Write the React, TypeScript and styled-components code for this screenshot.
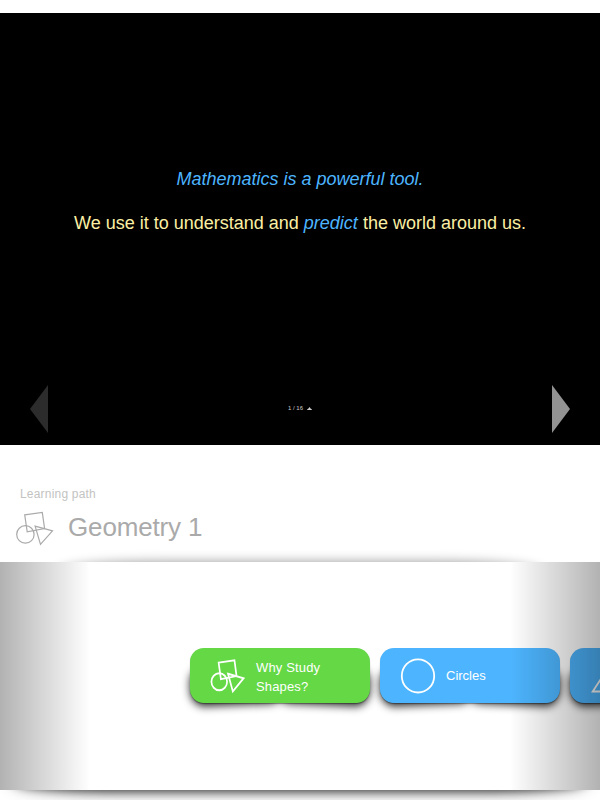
import React from "react";
import styled, { createGlobalStyle } from "styled-components";

const GlobalStyle = createGlobalStyle`
  html, body { margin: 0; background: #fff; overflow: hidden; }
  body { font-family: "Liberation Sans", Arial, sans-serif; }
`;

const Page = styled.div`
  display: flex;
  flex-direction: column;
  height: 800px;
  padding-top: 13px;
  box-sizing: border-box;
  overflow: hidden;
  isolation: isolate;
`;

const Slideshow = styled.section`
  display: flex;
  flex-direction: column;
  flex: none;
  height: 432px;
  background: #000;
`;

const Slide = styled.div`
  flex: 1;
  padding-top: 155px;
  text-align: center;
  color: #fbefa4;
  font-size: 18px;
  line-height: 22px;
`;

const Line = styled.p`
  margin: 0 0 22px;
`;

const Accent = styled.em`
  color: #4db5ff;
`;

const Controls = styled.nav`
  display: flex;
  align-items: center;
  justify-content: space-between;
  height: 48px;
  padding: 0 30px 12px;
`;

const ArrowButton = styled.button<{ $tone: string }>`
  display: flex;
  padding: 0;
  border: 0;
  background: none;
  color: ${(p) => p.$tone};
`;

const Counter = styled.div`
  display: flex;
  align-items: center;
  gap: 4px;
  color: #ccc;
  font-size: 6px;
  line-height: 8px;
  margin-top: -2px;
`;

const Heading = styled.header`
  flex: none;
  height: 117px;
  box-sizing: border-box;
  padding: 41px 0 0 14px;
`;

const Eyebrow = styled.div`
  padding-left: 6px;
  font-size: 12px;
  line-height: 16px;
  letter-spacing: 0.2px;
  color: #c3c3c3;
`;

const TitleRow = styled.div`
  display: flex;
  align-items: center;
  gap: 14px;
  height: 40px;
  margin-top: 5px;
  color: #aaa;
`;

const PathIcon = styled.span`
  display: flex;
  padding-top: 1px;
`;

const Title = styled.h1`
  margin: 0;
  font-size: 26px;
  line-height: 40px;
  font-weight: 400;
  letter-spacing: -0.15px;
`;

const PathPanel = styled.section`
  position: relative;
  flex: none;
  height: 228px;
  background: #fff;

  &::before, &::after {
    content: "";
    position: absolute;
    z-index: -1;
  }
  &::before {
    inset: 0 60px auto;
    height: 100px;
    border-radius: 100px / 10px;
    box-shadow: 0 0 12px rgba(0, 0, 0, 0.4);
  }
  &::after {
    inset: auto 14px 0;
    height: 100px;
    border-radius: 100px / 10px;
    box-shadow: 0 0 16px rgba(0, 0, 0, 0.8), 0 1px 8px rgba(0, 0, 0, 0.4);
  }
`;

const Track = styled.div`
  position: relative;
  z-index: 0;
  display: flex;
  gap: 10px;
  height: 100%;
  padding: 86px 0 0 190px;
  box-sizing: border-box;
  overflow: hidden;
`;

const Fade = styled.div<{ $side: "left" | "right" }>`
  position: absolute;
  z-index: 2;
  top: 0;
  bottom: 0;
  ${(p) => p.$side}: 0;
  width: 90px;
  background: linear-gradient(to ${(p) => (p.$side === "left" ? "right" : "left")}, rgba(0, 0, 0, 0.3), rgba(0, 0, 0, 0));
`;

const CardShell = styled.div`
  position: relative;
  flex: none;
  width: 180px;
  height: 55px;

  &::before, &::after {
    content: "";
    position: absolute;
    z-index: -1;
    bottom: 2px;
    width: 89px;
    height: 37px;
    border-radius: 14px 10px 10px 14px;
    box-shadow: 0 3px 8px 1px rgba(0, 0, 0, 0.85);
  }
  &::before { left: 1px; transform: rotate(-2.6deg); }
  &::after { right: 1px; transform: rotate(2.6deg); border-radius: 10px 14px 14px 10px; }
`;

const Card = styled.a<{ $color: string }>`
  display: flex;
  align-items: center;
  gap: 10px;
  height: 55px;
  box-sizing: border-box;
  padding: 0 30px 0 19px;
  border-radius: 14px;
  background: ${(p) => p.$color};
  box-shadow: 0 1px 1px rgba(0, 0, 0, 0.35);
  color: #fff;
  font-size: 13px;
  line-height: 19px;
`;

const CardIcon = styled.span`
  display: flex;
  flex: none;
  width: 37px;
`;

const CardLabel = styled.span<{ $wrapped?: boolean }>`
  padding-top: ${(p) => (p.$wrapped ? 3 : 0)}px;
  padding-bottom: ${(p) => (p.$wrapped ? 0 : 1)}px;
  letter-spacing: ${(p) => (p.$wrapped ? "0.15px" : "0")};
`;

function Arrow({ dir }: { dir: "left" | "right" }) {
  return (
    <svg width="18" height="48" viewBox="0 0 18 48" fill="currentColor">
      <path d={dir === "left" ? "M18 0V48L0 24Z" : "M0 0V48L18 24Z"} />
    </svg>
  );
}

function ShapesIcon({ width, height, stroke }: { width: number; height: number; stroke: number }) {
  return (
    <svg width={width} height={height} viewBox="0 0 40 40" preserveAspectRatio="none" fill="none" stroke="currentColor" strokeWidth={stroke}>
      <circle cx="11.4" cy="26.4" r="8.7" />
      <path d="M10.7 6.8L28.3 4.4L30.6 20.6L13.2 23.8Z" />
      <path d="M21.1 18.2L38.5 22.8L26.5 36.3Z" />
    </svg>
  );
}

function CircleIcon() {
  return (
    <svg width="37" height="37" viewBox="0 0 37 37" fill="none" stroke="currentColor" strokeWidth="1.8">
      <ellipse cx="19" cy="18.9" rx="16.2" ry="16.6" />
    </svg>
  );
}

function TriangleIcon() {
  return (
    <svg width="37" height="37" viewBox="0 0 37 37" fill="none" stroke="currentColor" strokeWidth="1.8">
      <path d="M3.7 34.5L19 11L35 34.5Z" />
    </svg>
  );
}

const cards = [
  { id: "why", label: "Why Study Shapes?", wrapped: true, color: "#64d845", icon: <ShapesIcon width={36} height={39} stroke={1.9} /> },
  { id: "circles", label: "Circles", color: "#4db5ff", icon: <CircleIcon /> },
  { id: "triangles", color: "#4db5ff", icon: <TriangleIcon /> },
];

export default function App() {
  return (
    <>
      <GlobalStyle />
      <Page>
        <Slideshow>
          <Slide>
            <Line><Accent>Mathematics is a powerful tool.</Accent></Line>
            <Line>We use it to understand and <Accent>predict</Accent> the world around us.</Line>
          </Slide>
          <Controls>
            <ArrowButton $tone="#2c2c2c" aria-label="Previous"><Arrow dir="left" /></ArrowButton>
            <Counter>
              <span>1 / 16</span>
              <svg width="5" height="3" viewBox="0 0 5 3" fill="currentColor"><path d="M0 3Q0 2 1.2 1.7L2.5 0L3.8 1.7Q5 2 5 3Z" /></svg>
            </Counter>
            <ArrowButton $tone="#929292" aria-label="Next"><Arrow dir="right" /></ArrowButton>
          </Controls>
        </Slideshow>
        <Heading>
          <Eyebrow>Learning path</Eyebrow>
          <TitleRow>
            <PathIcon><ShapesIcon width={40} height={40} stroke={1.2} /></PathIcon>
            <Title>Geometry 1</Title>
          </TitleRow>
        </Heading>
        <PathPanel>
          <Track>
            {cards.map((c) => (
              <CardShell key={c.id}>
                <Card $color={c.color}>
                  <CardIcon>{c.icon}</CardIcon>
                  {c.label && <CardLabel $wrapped={c.wrapped}>{c.label}</CardLabel>}
                </Card>
              </CardShell>
            ))}
          </Track>
          <Fade $side="left" />
          <Fade $side="right" />
        </PathPanel>
      </Page>
    </>
  );
}
